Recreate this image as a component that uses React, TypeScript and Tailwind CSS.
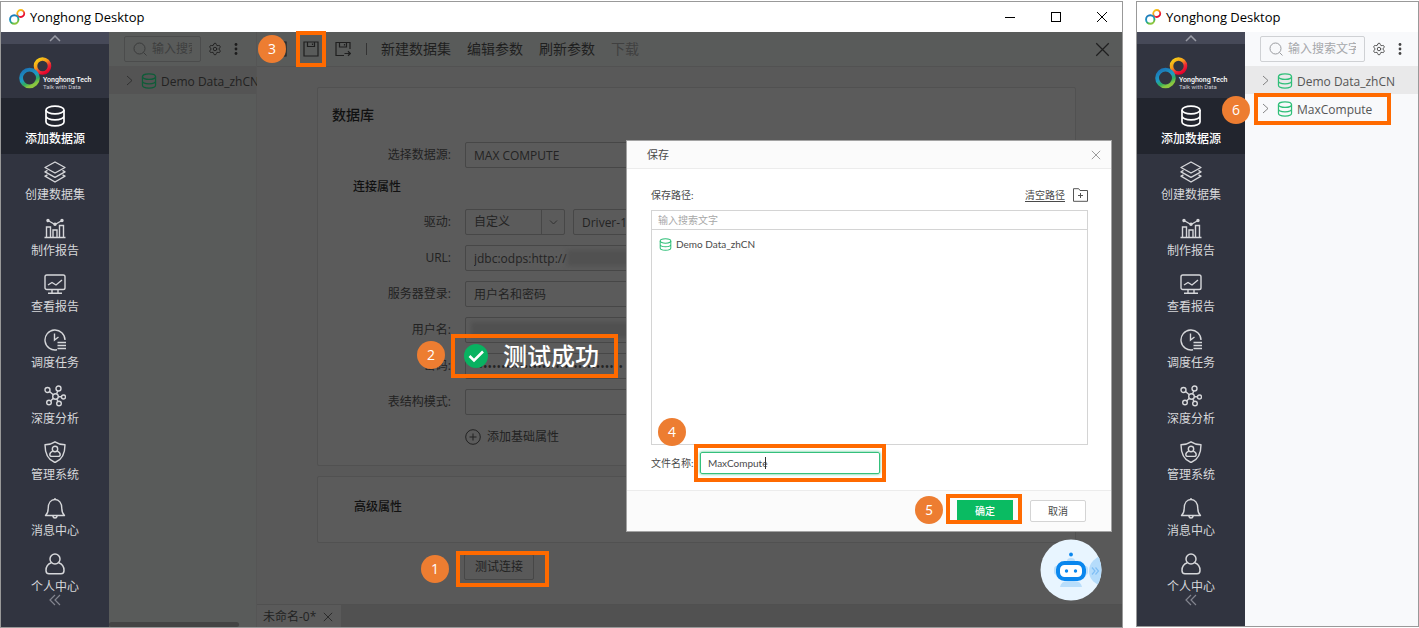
import React, { useState } from "react";
import { Settings } from "lucide-react";

const sans = "font-['Open_Sans','Noto_Sans_CJK_SC',sans-serif]";

type IconProps = { className?: string };

function Rings({ className, id }: { className: string; id: string }) {
  return (
    <svg viewBox="0 0 34 32" className={className} fill="none" aria-hidden="true">
      <defs>
        <linearGradient id={`${id}-cool`} x1="0" y1="0" x2="0.5" y2="1">
          <stop offset="0" stopColor="#1b6fb5" />
          <stop offset="0.55" stopColor="#1d9bc4" />
          <stop offset="0.8" stopColor="#2fae5e" />
          <stop offset="1" stopColor="#8cc63f" />
        </linearGradient>
        <linearGradient id={`${id}-warm`} x1="0.1" y1="0" x2="0.8" y2="1">
          <stop offset="0" stopColor="#f7d117" />
          <stop offset="0.4" stopColor="#f59a1b" />
          <stop offset="0.7" stopColor="#ee2a36" />
          <stop offset="1" stopColor="#e4002b" />
        </linearGradient>
      </defs>
      <circle cx="23.5" cy="9" r="7" stroke={`url(#${id}-warm)`} strokeWidth="3.6" />
      <circle cx="10.5" cy="21" r="8.400" stroke={`url(#${id}-cool)`} strokeWidth="3.8" />
    </svg>
  );
}

function DatabaseIcon({ className }: IconProps) {
  return (
    <svg viewBox="0 0 22 22" className={className} fill="none" stroke="currentColor" strokeWidth="1.7" aria-hidden="true">
      <ellipse cx="11" cy="5" rx="9" ry="3.8" />
      <path d="M2 5v12c0 2.1 4 3.8 9 3.8s9-1.700 9-3.800V5M2 11c0 2.100 4 3.800 9 3.800s9-1.700 9-3.800" />
    </svg>
  );
}

function LayersIcon({ className }: IconProps) {
  return (
    <svg viewBox="0 0 22 22" className={className} fill="none" stroke="currentColor" strokeWidth="1.4" strokeLinejoin="round" aria-hidden="true">
      <path d="M11 1l10 5.500-10 5.500L1 6.500z" />
      <path d="M3.500 9.400L1 10.800l10 5.500 10-5.500-2.500-1.400" />
      <path d="M3.500 13.800L1 15.200l10 5.800 10-5.800-2.500-1.400" />
    </svg>
  );
}

function ChartIcon({ className }: IconProps) {
  return (
    <svg viewBox="0 0 22 22" className={className} fill="none" stroke="currentColor" strokeWidth="1.4" aria-hidden="true">
      <path d="M0.500 20.500h21M2.500 20V10h4v10M9 20v-7h4v7M15.500 20V8.500h4V20" />
      <path d="M4 3.500l7 4 7-4" />
      <circle cx="4" cy="3.500" r="1" fill="currentColor" />
      <circle cx="11" cy="7.300" r="1" fill="currentColor" />
      <circle cx="18" cy="3.500" r="1" fill="currentColor" />
    </svg>
  );
}

function MonitorIcon({ className }: IconProps) {
  return (
    <svg viewBox="0 0 22 22" className={className} fill="none" stroke="currentColor" strokeWidth="1.400" aria-hidden="true">
      <rect x="1" y="2" width="20" height="14.500" rx="1.800" />
      <path d="M4 12l4-2.500 4 2.500 6-5M8 16.500v4M14 16.500v4M4 20.300h14" />
    </svg>
  );
}

function ClockIcon({ className }: IconProps) {
  return (
    <svg viewBox="0 0 22 22" className={className} fill="none" stroke="currentColor" strokeWidth="1.400" aria-hidden="true">
      <path d="M21 11A10 10 0 1 0 13 20.800" />
      <path d="M10.500 4.500V11l4-3" />
      <path d="M13.500 13.500H22M13.500 16.500H22M13.500 19.500H22" />
    </svg>
  );
}

function NodesIcon({ className }: IconProps) {
  return (
    <svg viewBox="0 0 22 22" className={className} fill="none" stroke="currentColor" strokeWidth="1.400" aria-hidden="true">
      <circle cx="11.500" cy="11.500" r="2.800" />
      <circle cx="3.500" cy="5" r="2.500" />
      <circle cx="14.500" cy="3.500" r="2.500" />
      <circle cx="19.500" cy="12" r="2" />
      <circle cx="15" cy="18.500" r="2.300" />
      <circle cx="5" cy="17.500" r="2.300" />
      <path d="M5.500 6.500l3.800 3.200M13.800 5.900l-1.200 2.900M14.300 11.700h3.200M12.700 14l1.300 2.500M9.300 13.300l-2.700 2.600" />
    </svg>
  );
}

function ShieldIcon({ className }: IconProps) {
  return (
    <svg viewBox="0 0 22 22" className={className} fill="none" stroke="currentColor" strokeWidth="1.400" strokeLinejoin="round" aria-hidden="true">
      <path d="M11 0.800c2.500 1.700 6 2.700 10 3C21 13 18 19 11 21.500 4 19 1 13 1 3.800c4-.3 7.500-1.300 10-3z" />
      <circle cx="11" cy="8" r="2.700" />
      <path d="M8.800 10.200C6.800 11 5.800 12.300 5.800 13.700c0 1.200.8 1.700 2 1.700h6.400c1.200 0 2-.5 2-1.700 0-1.400-1-2.700-3-3.500" />
    </svg>
  );
}

function BellIcon({ className }: IconProps) {
  return (
    <svg viewBox="0 0 22 22" className={className} fill="none" stroke="currentColor" strokeWidth="1.400" strokeLinejoin="round" aria-hidden="true">
      <path d="M11 1v1.500M1.500 18.500h19c-2-2-2.700-3.500-2.700-7C17.800 6 15 2.500 11 2.500S4.200 6 4.200 11.500c0 3.500-.7 5-2.700 7zM8.800 19c.3 1.300 1.100 2 2.200 2s1.900-.7 2.200-2" />
    </svg>
  );
}

function PersonIcon({ className }: IconProps) {
  return (
    <svg viewBox="0 0 22 22" className={className} fill="none" stroke="currentColor" strokeWidth="1.500" strokeLinejoin="round" aria-hidden="true">
      <circle cx="11" cy="6" r="5" />
      <path d="M7.300 9.800C4 11 2 14 2 17.500c0 2.300 1 3.300 3 3.300h12c2 0 3-1 3-3.300 0-3.500-2-6.500-5.300-7.700" />
    </svg>
  );
}

function Cross({ className }: IconProps) {
  return (
    <svg viewBox="0 0 12 12" className={className} fill="none" stroke="currentColor" aria-hidden="true">
      <path d="M1 1l10 10M11 1L1 11" />
    </svg>
  );
}

function Floppy({ arrow = false }: { arrow?: boolean }) {
  return (
    <svg viewBox="0 0 16 16" className="h-4 w-4" fill="none" stroke="currentColor" strokeWidth="1.200" aria-hidden="true">
      {arrow ? (
        <>
          <path d="M15 8V1.500H1v13h8M4.500 1.500v4.500h7V1.500M9.500 3v1.500" />
          <path d="M9.500 12.500H15M13 10.300l2.300 2.200-2.300 2.200" />
        </>
      ) : (
        <path d="M1 1h14v14H1zM4.500 1v4.500h7V1M9.500 2.500v1.500" />
      )}
    </svg>
  );
}

function Badge({ n, className }: { n: number; className: string }) {
  return (
    <span className={`absolute z-20 flex size-7 items-center justify-center rounded-full bg-[#ed7d31] text-sm leading-5 text-white ${className}`}>
      {n}
    </span>
  );
}

function Outline({ className }: { className: string }) {
  return <span className={`pointer-events-none absolute z-10 border-4 border-[#ff6a00] ${className}`} />;
}

const nav = [
  { label: "添加数据源", icon: DatabaseIcon },
  { label: "创建数据集", icon: LayersIcon },
  { label: "制作报告", icon: ChartIcon },
  { label: "查看报告", icon: MonitorIcon },
  { label: "调度任务", icon: ClockIcon },
  { label: "深度分析", icon: NodesIcon },
  { label: "管理系统", icon: ShieldIcon },
  { label: "消息中心", icon: BellIcon },
  { label: "个人中心", icon: PersonIcon },
];

function Sidebar({ id }: { id: string }) {
  return (
    <nav className="flex w-[108px] shrink-0 flex-col bg-[#313440] text-xs text-[#d6d7da]">
      <button aria-label="收起" className="flex h-3 items-center justify-center bg-[#464958] text-[#9a9ca6]">
        <svg viewBox="0 0 12 7" className="h-[7px] w-3" fill="none" stroke="currentColor" strokeWidth="1.500" aria-hidden="true">
          <path d="M1 6l5-5 5 5" />
        </svg>
      </button>
      <div className="relative h-[54px] pl-[18px] pt-[13px]">
        <Rings id={`${id}-logo`} className="h-8 w-[34px]" />
        <div className="absolute left-[42px] top-[32px] text-white font-[Roboto,sans-serif]">
          <div className="text-[7px] font-medium leading-[8px] whitespace-nowrap">Yonghong Tech</div>
          <div className="text-[6px] leading-[6px] whitespace-nowrap text-[#c9cad0]">Talk with Data</div>
        </div>
      </div>
      {nav.map(({ label, icon: Icon }, i) => (
        <a
          key={label}
          href="#"
          className={`flex flex-col items-center gap-1 pt-[7px] ${i === 0 ? "bg-[#22252e] font-medium text-white" : ""} ${i === nav.length - 1 ? "h-12" : "h-14"}`}
        >
          <Icon className="size-[22px] shrink-0" />
          <span className="leading-4">{label}</span>
        </a>
      ))}
      <button aria-label="折叠菜单" className="flex min-h-8 flex-1 justify-center text-[#83858f]">
        <svg viewBox="0 0 12 12" className="size-3" fill="none" stroke="currentColor" strokeWidth="1.200" aria-hidden="true">
          <path d="M6 1L1 6l5 5M11 1L6 6l5 5" />
        </svg>
      </button>
    </nav>
  );
}

function TitleBar({ id, controls = false }: { id: string; controls?: boolean }) {
  return (
    <header className="flex h-[30px] shrink-0 items-center bg-white pl-2 pr-[14px] text-black">
      <Rings id={`${id}-title`} className="h-4 w-[17px]" />
      <span className="ml-1 text-[13px] leading-5">Yonghong Desktop</span>
      {controls && (
        <div className="ml-auto flex items-center gap-[34px]">
          <button aria-label="最小化">
            <svg viewBox="0 0 12 12" className="size-3" stroke="currentColor"><path d="M1 6.500h10" /></svg>
          </button>
          <button aria-label="最大化">
            <svg viewBox="0 0 12 12" className="size-3" fill="none" stroke="currentColor"><rect x="1.500" y="1.500" width="9" height="9" /></svg>
          </button>
          <button aria-label="关闭"><Cross className="size-3" /></button>
        </div>
      )}
    </header>
  );
}

function SearchBar({ id, dark = false }: { id: string; dark?: boolean }) {
  return (
    <div className={`flex h-[34px] items-center pl-[15px] ${dark ? "pr-[18px]" : "pr-4"}`}>
      <label
        htmlFor={`${id}-search`}
        className={`flex h-[26px] min-w-0 flex-1 items-center gap-[5px] rounded-xs border pl-2 pr-2 ${dark ? "border-[#4b4c4c] text-[#3b3c3c]" : "border-[#cfd1d4] text-[#9a9ca0]"}`}
      >
        <svg viewBox="0 0 14 14" className="size-[14px] shrink-0" fill="none" stroke="currentColor" aria-hidden="true">
          <circle cx="6.500" cy="6.500" r="5.500" />
          <path d="M10.500 10.500l3 3" />
        </svg>
        <input
          id={`${id}-search`}
          placeholder="输入搜索文字"
          aria-label="搜索"
          className={`w-full min-w-0 bg-transparent text-xs outline-none ${dark ? "placeholder:text-[#3e3f3f]" : "placeholder:text-[#a6a8ab]"}`}
        />
      </label>
      <button aria-label="设置" className={`ml-[7px] ${dark ? "text-[#222]" : "text-[#555]"}`}>
        <Settings className="size-[14px]" strokeWidth={1.7} />
      </button>
      <button aria-label="更多" className={`ml-3 ${dark ? "text-[#1c1c1c]" : "text-[#444]"}`}>
        <svg viewBox="0 0 4 14" className="h-[14px] w-1" fill="currentColor" aria-hidden="true">
          <circle cx="2" cy="2.500" r="1.400" />
          <circle cx="2" cy="7" r="1.400" />
          <circle cx="2" cy="11.500" r="1.400" />
        </svg>
      </button>
    </div>
  );
}

function TreeRow({ name, className, icon }: { name: string; className: string; icon: string }) {
  return (
    <div className={`flex h-7 items-center pl-[17px] ${className}`}>
      <svg viewBox="0 0 7 11" className="h-[11px] w-[7px] shrink-0" fill="none" stroke="currentColor" strokeOpacity="0.700" aria-hidden="true">
        <path d="M1 1l5 4.500L1 10" />
      </svg>
      <DatabaseIcon className={`ml-2 mt-px size-4 shrink-0 ${icon}`} />
      <span className="ml-1 mt-[3px] whitespace-nowrap text-xs leading-4">{name}</span>
    </div>
  );
}

const box = "h-[26px] w-full rounded-xs border border-[#474747] bg-transparent px-2 text-xs text-[#232323] outline-none";

function Row({ label, id, children }: { label: string; id: string; children: React.ReactNode }) {
  return (
    <div className="flex h-[26px] items-center gap-[14px]">
      <label htmlFor={id} className="w-[133px] shrink-0 text-right">{label}:</label>
      <div className="relative flex min-w-0 flex-1 items-center gap-2">{children}</div>
    </div>
  );
}

function Toolbar() {
  const items = ["新建数据集", "编辑参数", "刷新参数"];
  return (
    <div className="relative flex h-[35px] shrink-0 items-center border-b border-[#525252] bg-[#595b5a] pl-[14px] pr-3 text-sm text-[#1f1f1f]">
      <Badge n={3} className="left-[1px] top-[3px]" />
      <button aria-label="新建"><Floppy /></button>
      <button aria-label="保存" className="relative ml-4">
        <Floppy />
        <Outline className="-inset-x-[7px] -inset-y-[10px]" />
      </button>
      <button aria-label="另存为" className="ml-4"><Floppy arrow /></button>
      <span className="ml-[15px] h-3 w-px bg-[#333]" />
      <div className="ml-[14px] flex gap-4">
        {items.map((t) => <button key={t} className="whitespace-nowrap leading-5">{t}</button>)}
        <button disabled className="whitespace-nowrap leading-5 text-[#404040]">下载</button>
      </div>
      <button aria-label="关闭" className="ml-auto"><Cross className="size-[15px]" /></button>
    </div>
  );
}

function ConnectionForm() {
  return (
    <section className="rounded-xs border border-[#515151] bg-[#5b5b5b] pb-[18px] pr-8 pt-[17px] text-xs text-[#222]">
      <h2 className="mb-[17px] pl-[14px] text-sm font-medium leading-5 text-[#111]">数据库</h2>
      <Row label="选择数据源" id="source">
        <input id="source" className={box} defaultValue="MAX COMPUTE" />
      </Row>
      <h3 className="mb-3 mt-2 pl-[35px] font-medium leading-[21px] text-[#111]">连接属性</h3>
      <div className="flex flex-col gap-[10px]">
        <Row label="驱动" id="driver">
          <div className="relative w-[100px] shrink-0">
            <select id="driver" className={`${box} appearance-none`}><option>自定义</option></select>
            <span className="pointer-events-none absolute inset-y-0 right-0 flex w-6 items-center justify-center border-l border-[#474747]">
              <svg viewBox="0 0 9 5" className="h-[5px] w-[9px]" fill="none" stroke="#333" aria-hidden="true"><path d="M1 .500l3.500 3.500L8 .500" /></svg>
            </span>
          </div>
          <input aria-label="驱动名称" className={box} defaultValue="Driver-1" />
        </Row>
        <Row label="URL" id="url">
          <input id="url" className={box} defaultValue="jdbc:odps:http://" />
          <span className="absolute left-[102px] h-4 w-[108px] bg-[#515151] blur-[2px]" />
        </Row>
        <Row label="服务器登录" id="login">
          <input id="login" className={box} defaultValue="用户名和密码" />
        </Row>
        <Row label="用户名" id="user">
          <input id="user" className={box} />
          <span className="absolute left-[6px] h-4 w-[180px] bg-[#505050] blur-[2px]" />
        </Row>
        <Row label="密码" id="password">
          <input id="password" type="password" className={`${box} text-[#111]`} defaultValue="000000000000000000000000000000000" />
          <div role="status" className="absolute -left-[14px] -top-[19px] z-10 flex h-11 w-[167px] items-center border-4 border-[#ff6a00] pl-[9px]">
            <svg viewBox="0 0 24 24" className="size-6 shrink-0" aria-hidden="true">
              <circle cx="12" cy="12" r="12" fill="#09b261" />
              <path d="M5.500 12l4.500 4.500 9-9" fill="none" stroke="#fff" strokeWidth="2.600" />
            </svg>
            <span className="ml-[15px] whitespace-nowrap text-2xl font-medium leading-8 text-white">测试成功</span>
          </div>
          <Badge n={2} className="-left-[48px] -top-[12px]" />
        </Row>
        <Row label="表结构模式" id="schema">
          <input id="schema" className={box} />
        </Row>
      </div>
      <button className="ml-[147px] mt-3 flex items-center gap-[6px] leading-5">
        <svg viewBox="0 0 16 16" className="size-4" fill="none" stroke="currentColor" aria-hidden="true">
          <circle cx="8" cy="8" r="7.300" />
          <path d="M4.500 8h7M8 4.500v7" />
        </svg>
        添加基础属性
      </button>
    </section>
  );
}

function SaveDialog() {
  const [name, setName] = useState("MaxCompute");
  return (
    <div role="dialog" aria-label="保存" className="absolute right-[10px] top-[138px] z-10 w-[486px] border border-[#a3a3a3] bg-white text-[10px] text-[#4a4a4a] font-[Lato,'Noto_Sans_CJK_SC',sans-serif]">
      <div className="flex h-7 items-center justify-between border-b border-[#ececec] bg-[#fbfbfb] pl-5 pr-[10px]">
        <h2 className="text-[11px] leading-4">保存</h2>
        <button aria-label="关闭" className="text-[#888]"><Cross className="size-[10px]" /></button>
      </div>
      <div className="pb-[6px] pl-6 pr-[23px] pt-[18px]">
        <div className="flex h-4 items-center">
          <span>保存路径:</span>
          <a href="#" className="ml-auto underline underline-offset-2">清空路径</a>
          <button aria-label="新建文件夹" className="ml-2">
            <svg viewBox="0 0 15 14" className="h-[14px] w-[15px]" fill="none" stroke="#555" strokeLinejoin="round" aria-hidden="true">
              <path d="M.500 13.300V.700h5.200l1.300 1.800h7.500v10.800zM5 7.500h5M7.500 5v5" />
            </svg>
          </button>
        </div>
        <div className="mt-[7px] h-[235px] border border-[#d4d4d4]">
          <input aria-label="搜索路径" placeholder="输入搜索文字" className="h-[19px] w-full border-b border-[#d4d4d4] px-[6px] outline-none placeholder:text-[#a8a8a8]" />
          <div className="flex h-7 items-center gap-1 pl-[7px]">
            <DatabaseIcon className="size-[13px] text-[#2fbf78]" />
            <span className="leading-4">Demo Data_zhCN</span>
          </div>
        </div>
        <div className="mt-[5px] flex h-[26px] items-center">
          <label htmlFor="file-name" className="w-[49px] shrink-0 whitespace-nowrap">文件名称:</label>
          <div className="relative flex items-center">
            <input id="file-name" value={name} onChange={(e) => setName(e.target.value)} className="h-[22px] w-[180px] rounded-xs border border-[#34c07c] px-[7px] shadow-[0_0_3px_#34c07c] outline-none" />
            <span className="absolute left-[65px] h-3 w-px bg-[#333]" />
            <Outline className="-inset-x-[6px] -inset-y-[8px]" />
            <Badge n={4} className="-left-[42px] -top-[34px]" />
          </div>
        </div>
      </div>
      <div className="mt-2 flex h-[41px] items-center justify-end gap-[17px] border-t border-[#ececec] bg-[#fbfbfb] pr-[25px]">
        <div className="relative flex">
          <button className="h-[22px] w-14 bg-[#0abb62] font-medium text-white">确定</button>
          <Outline className="-left-[11px] -top-[6px] h-[30px] w-[76px]" />
          <Badge n={5} className="-left-[42px] -top-1" />
        </div>
        <button className="h-[22px] w-14 rounded-xs border border-[#d4d4d4] bg-white">取消</button>
      </div>
    </div>
  );
}

function Robot() {
  return (
    <button aria-label="智能助手" className="absolute bottom-[26px] right-5 z-10">
      <svg viewBox="0 0 62 62" className="size-[62px]" aria-hidden="true">
        <defs><clipPath id="robot-disc"><circle cx="31" cy="31" r="30.500" /></clipPath></defs>
        <circle cx="31" cy="31" r="30.500" fill="#e8f5ff" />
        <circle cx="64" cy="32" r="15" fill="#b5dcfb" clipPath="url(#robot-disc)" />
        <path d="M20 48q1-6 8-6h6q7 0 8 6z" fill="#b9defb" />
        <path d="M27 22q0-3 4-3t4 3z" fill="#b9defb" />
        <rect x="14" y="27" width="34" height="9" rx="3" fill="#b9defb" />
        <rect x="18" y="24" width="26" height="16" rx="6.500" fill="#fff" stroke="#0a87ee" strokeWidth="4" />
        <circle cx="26.500" cy="32" r="1.700" fill="#0a87ee" />
        <circle cx="35.500" cy="32" r="1.700" fill="#0a87ee" />
        <circle cx="31" cy="15.500" r="1.900" fill="#0a87ee" />
        <path d="M52 28.500l3 3.500-3 3.500M55.500 28.500l3 3.500-3 3.500" fill="none" stroke="#80bff5" strokeWidth="1.200" />
      </svg>
    </button>
  );
}

export default function App() {
  return (
    <div className={`flex min-h-screen gap-[13px] overflow-hidden bg-white pt-px ${sans}`}>
      <div className="relative flex min-w-0 flex-1 flex-col border border-[#999]">
        <TitleBar id="main" controls />
        <div className="flex min-h-0 flex-1">
          <Sidebar id="main" />
          <aside className="flex w-[148px] shrink-0 flex-col border-r border-[#555] bg-[#595b5a]">
            <SearchBar id="main" dark />
            <TreeRow name="Demo Data_zhCN" className="bg-[#545454] text-[#222]" icon="text-[#0f5c38]" />
            <div className="mt-auto h-[5px] w-[130px] rounded-full bg-[#444]" />
          </aside>
          <main className="flex min-w-0 flex-1 flex-col bg-[#595959]">
            <Toolbar />
            <div className="flex flex-1 flex-col gap-[10px] pl-[60px] pr-[46px] pt-5">
              <ConnectionForm />
              <section className="rounded-xs border border-[#515151] bg-[#5b5b5b] pb-[19px] pl-9 pt-[14px] text-xs font-medium leading-8 text-[#111]">
                <h3>高级属性</h3>
              </section>
              <div className="relative ml-[147px] w-fit">
                <button className="h-[26px] w-[70px] rounded-xs border border-[#474747] text-xs text-[#222]">测试连接</button>
                <Outline className="-left-2 -top-[2px] h-9 w-[93px]" />
                <Badge n={1} className="-left-[43px] top-[2px]" />
              </div>
            </div>
            <div className="flex h-[23px] shrink-0 border-t border-[#505050] bg-[#515151] text-xs text-[#222]">
              <div className="flex w-[84px] items-center justify-between bg-[#5a5a5a] pl-[6px] pr-2 pt-[2px]">
                <span className="whitespace-nowrap leading-5">未命名-0*</span>
                <button aria-label="关闭标签"><Cross className="size-[10px]" /></button>
              </div>
            </div>
          </main>
        </div>
        <SaveDialog />
        <Robot />
      </div>
      <div className="mb-px flex w-[283px] shrink-0 flex-col border border-[#999]">
        <TitleBar id="side" />
        <div className="flex flex-1">
          <Sidebar id="side" />
          <aside className="min-w-0 flex-1 bg-[#f8f9fb]">
            <SearchBar id="side" />
            <TreeRow name="Demo Data_zhCN" className="bg-[#e9e9ea] text-[#555]" icon="text-[#2fbf78]" />
            <div className="relative">
              <TreeRow name="MaxCompute" className="text-[#555]" icon="text-[#2fbf78]" />
              <Outline className="left-[9px] -top-px h-8 w-[137px]" />
              <Badge n={6} className="-left-[23px] top-[2px]" />
            </div>
          </aside>
        </div>
      </div>
    </div>
  );
}
